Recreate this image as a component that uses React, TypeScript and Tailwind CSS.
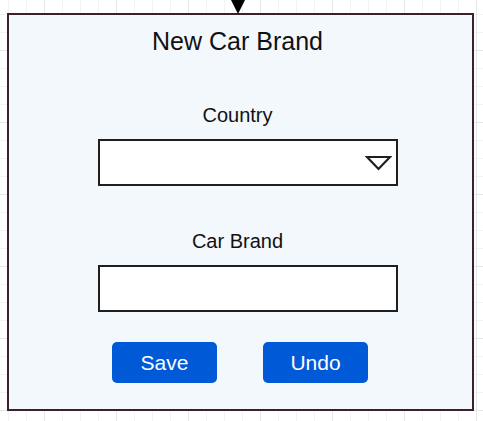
export default function App() {
  return (
    <div
      className="relative w-[483px] h-[421px] overflow-hidden bg-white pt-[13px] pl-[7px] font-['Liberation_Sans',Arial,sans-serif] text-[#111]"
      style={{
        backgroundImage:
          "linear-gradient(to right, #e6e6e6 1px, transparent 1px), linear-gradient(to bottom, #e6e6e6 1px, transparent 1px), linear-gradient(to right, #f3f3f3 1px, transparent 1px), linear-gradient(to bottom, #f3f3f3 1px, transparent 1px)",
        backgroundSize: "72px 72px, 72px 72px, 18px 18px, 18px 18px",
        backgroundPosition: "44px 50px, 44px 50px, 8px 14px, 8px 14px",
      }}
    >
      {/* incoming connector arrow */}
      <svg className="absolute left-[230px] top-0" width="16" height="15" viewBox="0 0 16 15">
        <polygon points="1,0 15,0 8,14" fill="#000" />
      </svg>

      <div className="w-[467px] h-[398px] border-2 border-[#3b2030] bg-[#f3f8fd] flex flex-col items-center pr-[6px]">
        <h1 className="mt-[12px] text-[25px] leading-[28px]">New Car Brand</h1>

        <div className="mt-[48px] text-[20px] leading-[24px]">Country</div>
        <div className="mt-[12px] self-start ml-[89px] w-[300px] h-[47px] border-2 border-[#1f1f1f] bg-white flex items-center justify-end pr-[4px]">
          <svg width="27" height="16" viewBox="0 0 27 16">
            <polygon points="2,2 25,2 13.5,14" fill="none" stroke="#1f1f1f" strokeWidth="2.2" strokeLinejoin="miter" />
          </svg>
        </div>

        <div className="mt-[43px] text-[20px] leading-[24px]">Car Brand</div>
        <div className="mt-[12px] self-start ml-[89px] w-[300px] h-[47px] border-2 border-[#1f1f1f] bg-white" />

        <div className="mt-[30px] self-start ml-[103px] flex gap-[46px]">
          <button className="w-[105px] h-[41px] rounded-[5px] bg-[#0059d6] text-white text-[21px] leading-none">
            Save
          </button>
          <button className="w-[105px] h-[41px] rounded-[5px] bg-[#0059d6] text-white text-[21px] leading-none">
            Undo
          </button>
        </div>
      </div>
    </div>
  );
}
